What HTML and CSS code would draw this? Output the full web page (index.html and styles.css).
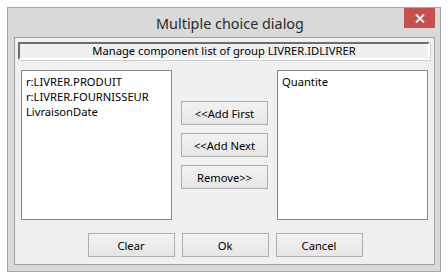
FILE: index.html
```html
<!DOCTYPE html>
<html lang="en">
<head>
    <meta charset="UTF-8">
    <title>Multiple choice dialog</title>
    <link rel="stylesheet" href="styles.css">
</head>
<body>
    <div class="window">
        <div class="titlebar">
            <span class="title">Multiple choice dialog</span>
            <button class="close" aria-label="Close">
                <svg width="10" height="9" viewBox="0 0 10 9">
                    <path d="M1 0.5 L9 8.5 M9 0.5 L1 8.5" stroke="#fff" stroke-width="1.8"/>
                </svg>
            </button>
        </div>
        <div class="client">
            <div class="caption">Manage component list of group LIVRER.IDLIVRER</div>
            <div class="main">
                <ul class="listbox">
                    <li>r:LIVRER.PRODUIT</li>
                    <li>r:LIVRER.FOURNISSEUR</li>
                    <li>LivraisonDate</li>
                </ul>
                <div class="moves">
                    <button class="btn">&lt;&lt;Add First</button>
                    <button class="btn">&lt;&lt;Add Next</button>
                    <button class="btn">Remove&gt;&gt;</button>
                </div>
                <ul class="listbox">
                    <li>Quantite</li>
                </ul>
            </div>
            <div class="actions">
                <button class="btn">Clear</button>
                <button class="btn">Ok</button>
                <button class="btn">Cancel</button>
            </div>
        </div>
    </div>
</body>
</html>
```

FILE: styles.css
```css
body {
    margin: 0;
    background-color: #ffffff;
    font-family: 'Noto Sans', 'Open Sans', sans-serif;
    font-size: 11.2px;
    color: #000;
}
.window {
    margin: 7px 0 0 7px;
    width: 421px;
    height: 257px;
    border: 1px solid #a6a6a6;
    background-color: #d9d9d9;
    padding: 0 5px 6px 6px;
}
.titlebar {
    position: relative;
    height: 29px;
    display: flex;
    align-items: center;
    justify-content: center;
}
.title {
    font-size: 14.4px;
    color: #2b2b2b;
    margin-left: 11px;
    margin-top: 1px;
}
.close {
    position: absolute;
    top: 0;
    right: 0;
    width: 31px;
    height: 20px;
    border: none;
    padding: 0;
    background-color: #c75050;
    display: flex;
    align-items: center;
    justify-content: center;
}
.client {
    height: 226px;
    border: 1px solid #a0a0a0;
    background-color: #f0f0f0;
    display: flex;
    flex-direction: column;
}
.caption {
    height: 14px;
    margin: 4px 4px 0 3px;
    border: 2px solid #6d6d6d;
    border-right-color: #ffffff;
    border-bottom-color: #ffffff;
    box-shadow: 1px 1px 0 #cfcfcf;
    text-align: center;
    line-height: 14px;
}
.main {
    display: flex;
    margin: 10px 6px 0 6px;
    height: 150px;
}
.listbox {
    list-style: none;
    margin: 0;
    width: 145px;
    height: 144px;
    padding: 3px 2px 1px 4px;
    border: 1px solid #828790;
    background-color: #fff;
    line-height: 15px;
}
.moves {
    display: flex;
    flex-direction: column;
    gap: 8px;
    margin: 31px 9px 0 9px;
}
.btn {
    width: 87px;
    height: 24px;
    padding: 0;
    border: 1px solid #adadad;
    background: linear-gradient(#f2f2f2, #e6e6e6);
    font-family: inherit;
    font-size: 11.2px;
    color: #000;
}
.actions {
    display: flex;
    justify-content: center;
    gap: 7px;
    margin-top: 13px;
    margin-left: 1px;
}
```
